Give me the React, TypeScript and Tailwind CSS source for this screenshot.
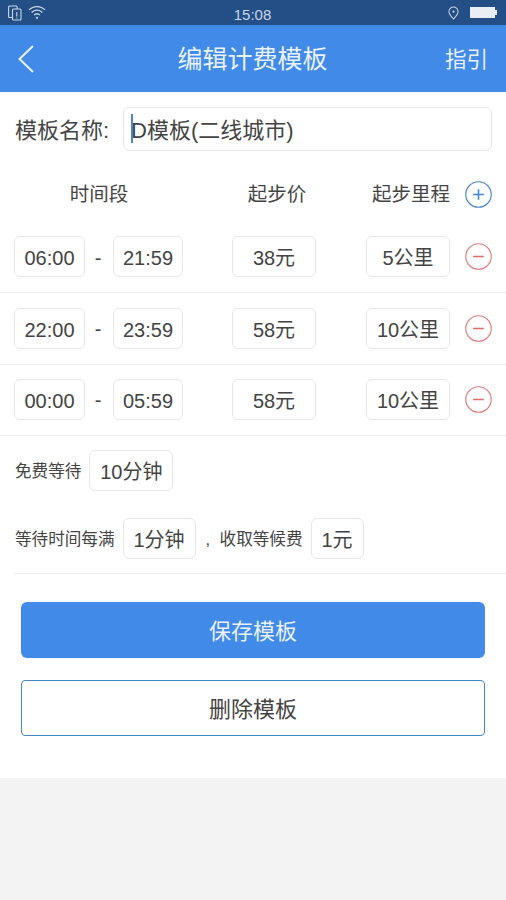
const font = 'font-["Liberation_Sans","Noto_Sans_CJK_SC",sans-serif]';

const rows = [
  { start: '06:00', end: '21:59', price: '38元', distance: '5公里' },
  { start: '22:00', end: '23:59', price: '58元', distance: '10公里' },
  { start: '00:00', end: '05:59', price: '58元', distance: '10公里' },
];

const Box = ({ className, children }: { className: string; children: React.ReactNode }) => (
  <div className={`flex h-[41px] shrink-0 items-center justify-center rounded-[6px] border border-[#e6e6e6] bg-white pt-[3px] text-[20px] text-[#444] ${className}`}>
    {children}
  </div>
);

const RoundButton = ({ type }: { type: 'add' | 'remove' }) => {
  const color = type === 'add' ? '#4a86c8' : '#e07f7f';
  return (
    <svg width="27" height="27" viewBox="0 0 28 28" fill="none" stroke={color} className="shrink-0">
      <circle cx="14" cy="14" r="13.2" strokeWidth="1.2" />
      <path d="M8.5 14h11" strokeWidth="1.6" stroke={type === 'add' ? '#3f88e0' : '#e26d6d'} />
      {type === 'add' && <path d="M14 8.5v11" strokeWidth="1.6" stroke="#3f88e0" />}
    </svg>
  );
};

const StatusBar = () => (
  <div className="flex h-[25px] items-center justify-between bg-[#244f86] pl-[8px] pr-[9px] text-[#c9d6e6]">
    <div className="flex w-[100px] items-center gap-[6px]">
      <svg width="14" height="16" viewBox="0 0 14 16" fill="none" stroke="currentColor" strokeWidth="1.1">
        <rect x="0.6" y="1" width="8.5" height="11.5" rx="1" />
        <rect x="4.5" y="4" width="8.5" height="11" rx="1" fill="#244f86" />
        <path d="M8.8 7v4.5M8.8 12.6v1" />
      </svg>
      <svg width="18" height="15" viewBox="0 0 17 14" fill="none" stroke="currentColor" strokeWidth="1.2">
        <path d="M1 4.5a10.5 10.5 0 0 1 15 0M3.4 7a7 7 0 0 1 10.2 0M5.8 9.4a3.6 3.6 0 0 1 5.4 0" />
        <circle cx="8.5" cy="12" r="1.1" fill="currentColor" stroke="none" />
      </svg>
    </div>
    <span className="pt-[3px] text-[15px] leading-none">15:08</span>
    <div className="flex w-[100px] items-center justify-end gap-[11px]">
      <svg width="11" height="14" viewBox="0 0 12 15" fill="none" stroke="currentColor" strokeWidth="1.1">
        <path d="M6 14C3 10.8 1 8.6 1 6a5 5 0 0 1 10 0c0 2.6-2 4.8-5 8Z" />
        <circle cx="6" cy="6" r="1.1" fill="currentColor" stroke="none" />
      </svg>
      <div className="flex items-center">
        <div className="h-[11px] w-[25px] bg-[#e9eef5]" />
        <div className="h-[5px] w-[2px] bg-[#e9eef5]" />
      </div>
    </div>
  </div>
);

export default function App() {
  return (
    <div className={`flex h-[900px] flex-col bg-[#f3f3f3] ${font}`}>
      <StatusBar />
      <header className="flex h-[67px] items-center bg-[#418ae8] pl-[17px] pr-[18px] text-[#e8f1fc]">
        <div className="flex-1">
          <svg width="18" height="30" viewBox="0 0 18 30" fill="none" stroke="currentColor" strokeWidth="2">
            <path d="M16 2 2.5 15 16 28" />
          </svg>
        </div>
        <h1 className="pt-[3px] text-[25px] font-normal">编辑计费模板</h1>
        <div className="flex-1 pt-[3px] text-right text-[21.5px]">指引</div>
      </header>

      <main className="h-[686px] bg-white">
        <div className="flex items-center pl-[15px] pr-[14px] pt-[15px]">
          <span className="w-[108px] shrink-0 pt-[3px] text-[22px] text-[#444]">模板名称:</span>
          <div className="flex h-[44px] flex-1 items-center rounded-[6px] border border-[#e6e6e6] pl-[7px] text-[22px] text-[#444]">
            <span className="relative pt-[3px]">
              <span className="absolute left-0 top-[3px] h-[29px] w-[2px] bg-[#4a86c8]" />
              D模板(二线城市)
            </span>
          </div>
        </div>

        <div className="flex h-[71px] items-center px-[14px] pt-[15px] text-[19.5px] text-[#444]">
          <span className="w-[170px] shrink-0 pt-[2px] text-center">时间段</span>
          <span className="ml-[51px] w-[84px] shrink-0 pt-[2px] text-center">起步价</span>
          <span className="ml-[50px] w-[84px] shrink-0 whitespace-nowrap pt-[2px] text-center">起步里程</span>
          <span className="ml-[12px] flex">
            <RoundButton type="add" />
          </span>
        </div>

        {rows.map((row) => (
          <div key={row.start} className="flex h-[71.4px] items-center border-b border-[#efefef] pb-[1px] pl-[14px] pr-[14px]">
            <Box className="w-[71px]">{row.start}</Box>
            <span className="w-[28px] shrink-0 pr-[2px] pt-[2px] text-center text-[20px] text-[#444]">-</span>
            <Box className="w-[70px]">{row.end}</Box>
            <Box className="ml-[49px] w-[84px]">{row.price}</Box>
            <Box className="ml-[50px] w-[84px]">{row.distance}</Box>
            <span className="ml-[15px] flex">
              <RoundButton type="remove" />
            </span>
          </div>
        ))}

        <div className="flex items-center pl-[15px] pt-[14px] text-[16.6px] text-[#444]">
          <span className="pt-[3px]">免费等待</span>
          <Box className="ml-[8px] w-[84px]">10分钟</Box>
        </div>

        <div className="ml-[14px] flex items-center border-b border-[#efefef] pb-[14px] pl-[1px] pt-[27px] text-[16.6px] text-[#444]">
          <span className="pt-[3px]">等待时间每满</span>
          <Box className="ml-[8px] w-[73px]">1分钟</Box>
          <span className="ml-[10px] w-[14px] pt-[3px]">,</span>
          <span className="pt-[3px]">收取等候费</span>
          <Box className="ml-[8px] w-[53px]">1元</Box>
        </div>

        <div className="flex flex-col gap-[22px] px-[21px] pt-[28px]">
          <button className="h-[56px] rounded-[6px] bg-[#418ae8] pt-[2px] text-[22px] text-[#e8f1fc]">保存模板</button>
          <button className="h-[56px] rounded-[4px] border-[1.5px] border-[#4a86c8] bg-white pt-[2px] text-[22px] text-[#444]">删除模板</button>
        </div>
      </main>
    </div>
  );
}
